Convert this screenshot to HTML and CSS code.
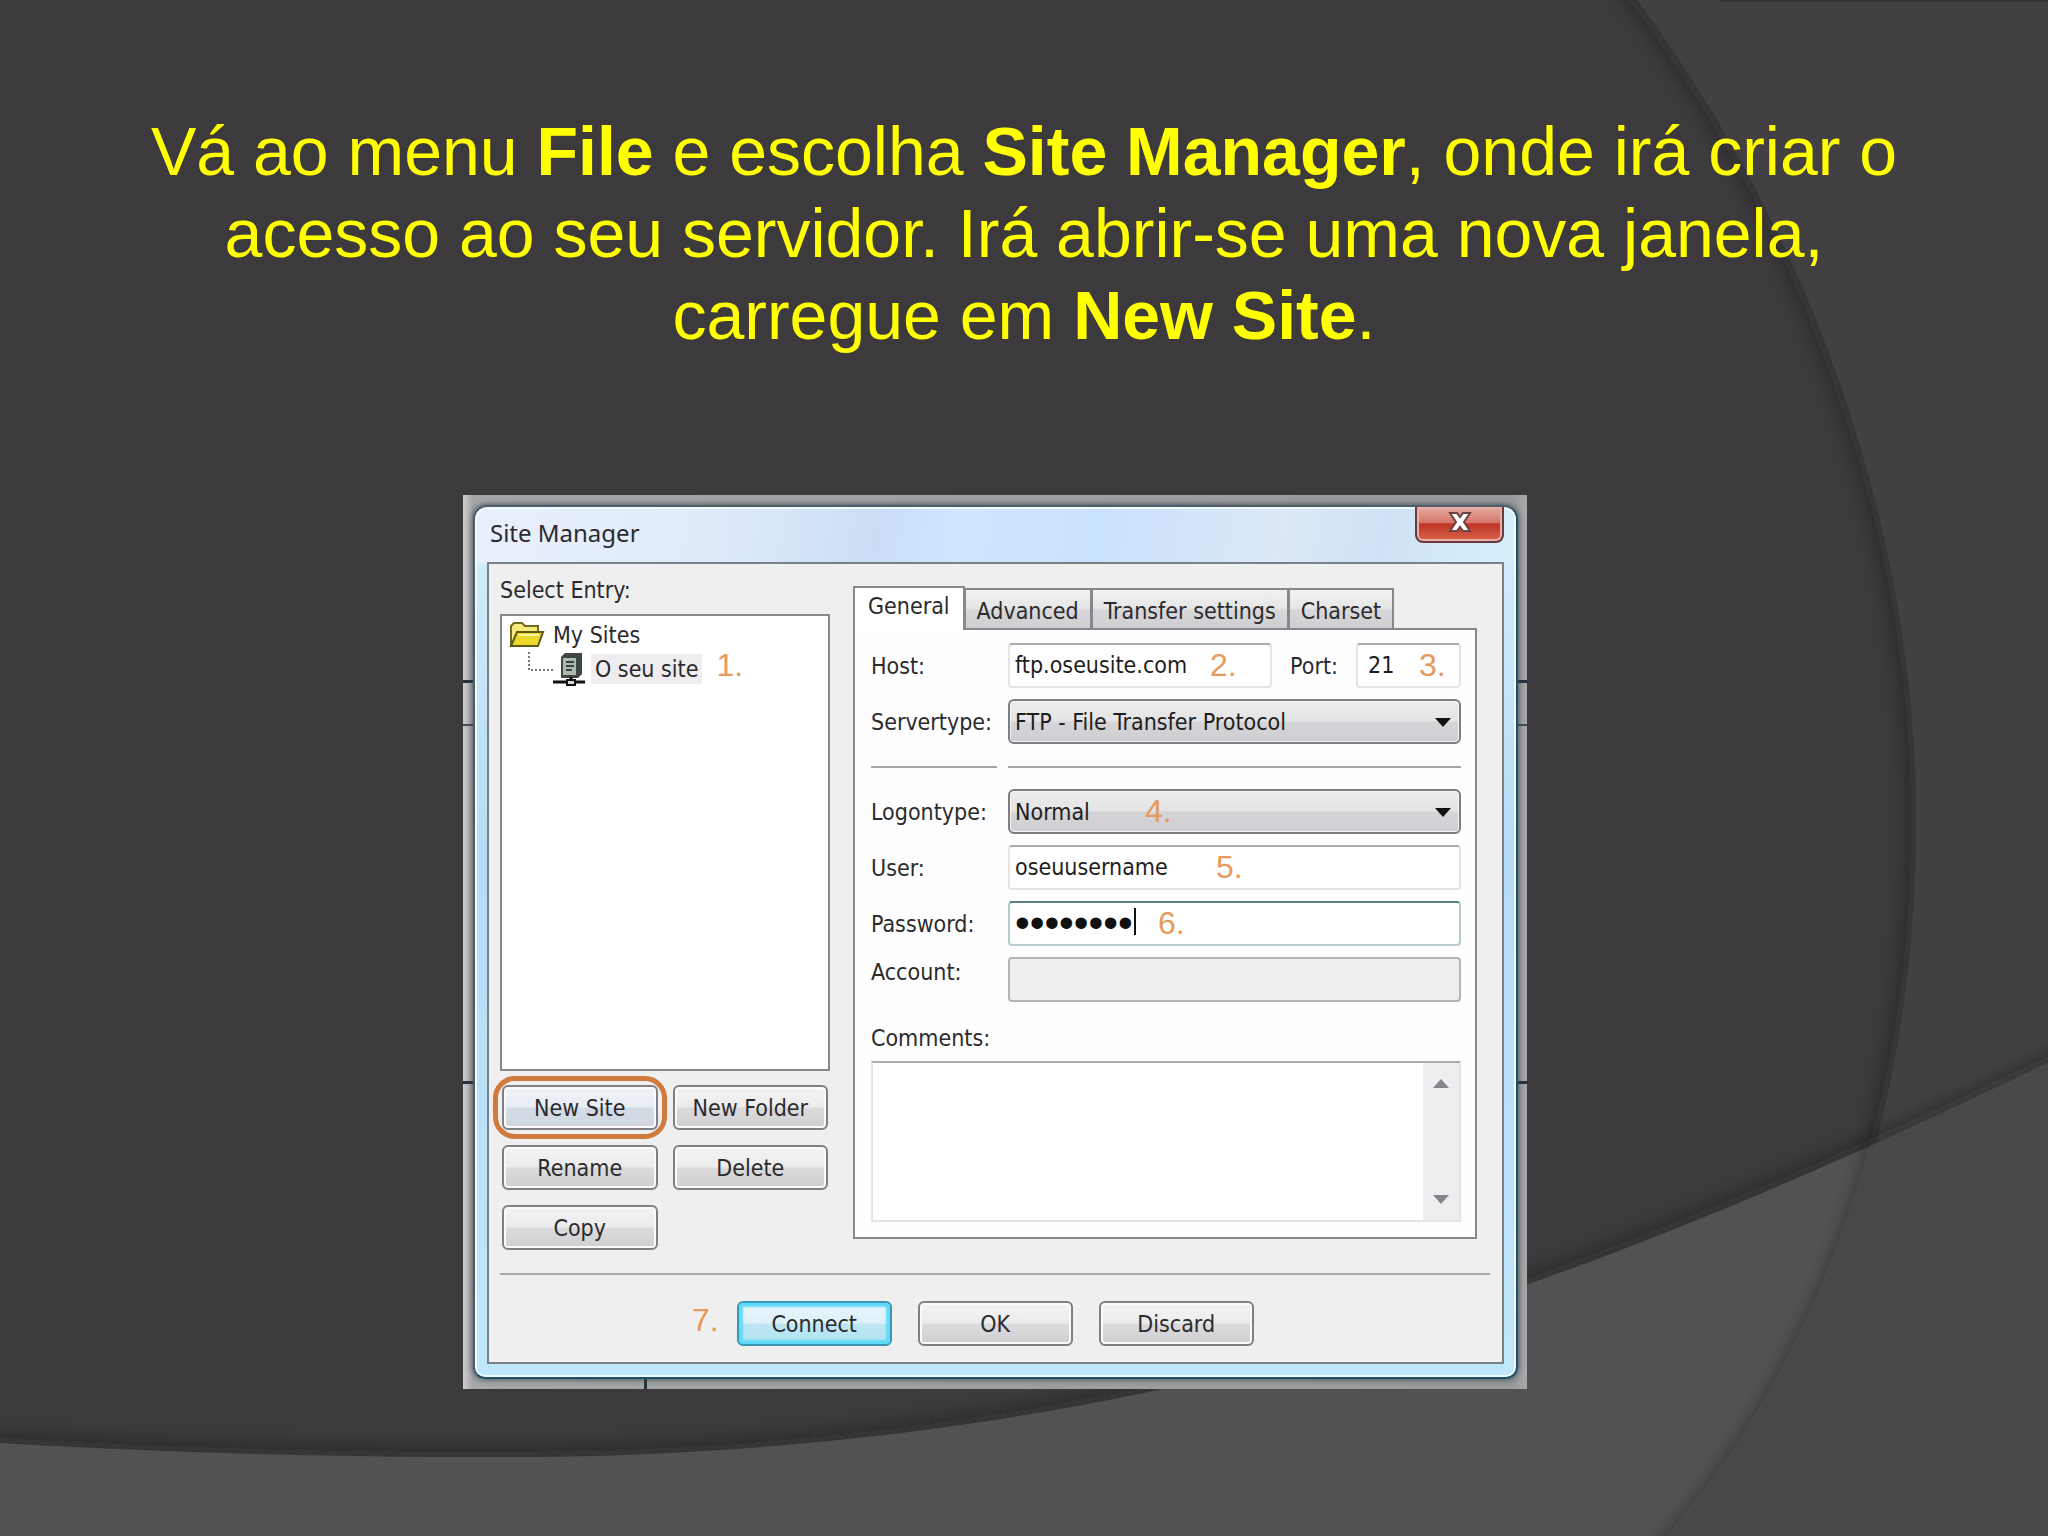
FILE: index.html
```html
<!DOCTYPE html>
<html lang="pt">
<head>
    <meta charset="UTF-8">
    <meta name="viewport" content="width=device-width, initial-scale=1.0">
    <title>Site Manager</title>
    <link rel="stylesheet" href="styles.css">
</head>
<body>
    <svg class="backdrop" viewBox="0 0 2048 1536" preserveAspectRatio="none" aria-hidden="true">
        <defs>
            <filter id="soft" x="-20%" y="-20%" width="140%" height="140%">
                <feGaussianBlur stdDeviation="9" />
            </filter>
            <clipPath id="leftOfArc">
                <path d="M0 0H1637C1830 260 1916 560 1916 820C1916 1090 1840 1340 1676 1536H0Z" />
            </clipPath>
            <clipPath id="aboveWave">
                <path d="M0 0H2048V1063C1880 1144 1700 1224 1526 1285C1230 1392 880 1460 480 1457C380 1457 200 1455 0 1443Z" />
            </clipPath>
            <clipPath id="belowWave">
                <path d="M0 1443C200 1455 380 1457 480 1457C880 1460 1230 1392 1526 1285C1700 1224 1880 1144 2048 1063V1536H0Z" />
            </clipPath>
        </defs>
        <rect width="2048" height="1536" fill="#3c3a3c" />
        <path fill="#424042" d="M1637 0C1830 260 1916 560 1916 820C1916 1090 1840 1340 1676 1536H2048V0Z" />
        <g clip-path="url(#aboveWave)">
            <path class="shade" filter="url(#soft)" d="M-40 1441L0 1443C200 1455 380 1457 480 1457C880 1460 1230 1392 1526 1285C1700 1224 1880 1144 2048 1063L2088 1043" />
        </g>
        <g clip-path="url(#belowWave)">
            <rect width="2048" height="1536" fill="#535154" />
            <path fill="#4a484b" d="M1637 0C1830 260 1916 560 1916 820C1916 1090 1840 1340 1676 1536H2048V0Z" />
        </g>
        <g clip-path="url(#leftOfArc)">
            <path class="shade" filter="url(#soft)" d="M1617 -26L1637 0C1830 260 1916 560 1916 820C1916 1090 1840 1340 1676 1536L1650 1566" />
        </g>
        <path d="M1720 1H2048" stroke="#363436" stroke-width="2" />
    </svg>

    <main class="slide">
        <h1 class="lead">Vá ao menu <b>File</b> e escolha <b>Site Manager</b>, onde irá criar o acesso ao seu servidor. Irá abrir-se uma nova janela, carregue em <b>New Site</b>.</h1>

        <div class="desktop">
            <div class="window">
                <div class="titlebar">
                    <span class="title">Site Manager</span>
                    <button type="button" class="close" aria-label="Close">
                        <svg width="24" height="20" viewBox="0 0 24 20">
                            <path d="M2 1H9L12 5L15 1H22L16 10L22 19H15L12 15L9 19H2L8 10Z" fill="#fff" stroke="#6d4344" stroke-width="2" />
                        </svg>
                    </button>
                </div>

                <form class="client">
                    <div class="columns">
                        <section class="entries">
                            <div class="caption">Select Entry:</div>
                            <ul class="tree">
                                <li>
                                    <svg width="36" height="28" viewBox="0 0 36 28">
                                        <path d="M2 25V5L5 2H13L16 5H29V11" fill="#f4ea7c" stroke="#6f6a20" stroke-width="2" />
                                        <path d="M2 25L8 11H34L29 25Z" fill="#ecd92c" stroke="#5e5914" stroke-width="2" />
                                        <path d="M10 14H30" stroke="#fbf6a8" stroke-width="2" />
                                    </svg>
                                    <span>My Sites</span>
                                </li>
                                <li class="child">
                                    <svg width="58" height="34" viewBox="0 0 58 34">
                                        <path d="M2 0V18H26" fill="none" stroke="#777" stroke-width="2" stroke-dasharray="2 2" />
                                        <path d="M34 5L38 1H55V22L51 26H34Z" fill="#3f4643" />
                                        <path d="M36 6H49V23H36Z" fill="#a9bcae" />
                                        <path d="M39 10H47M39 14H47M39 18H45" stroke="#3a443d" stroke-width="2" />
                                        <path d="M44 25V30M26 30H58" stroke="#111" stroke-width="3" />
                                        <rect x="40" y="28" width="8" height="5" fill="#d8dcd8" stroke="#111" stroke-width="2" />
                                    </svg>
                                    <span class="selected">O seu site</span>
                                    <span class="step">1.</span>
                                </li>
                            </ul>
                            <div class="entry-buttons">
                                <div class="ringed"><button type="button" class="btn cool">New Site</button></div>
                                <button type="button" class="btn">New Folder</button>
                                <button type="button" class="btn">Rename</button>
                                <button type="button" class="btn">Delete</button>
                                <button type="button" class="btn">Copy</button>
                            </div>
                        </section>

                        <section class="settings">
                            <div class="tabs" role="tablist">
                                <button type="button" class="tab active" role="tab" aria-selected="true">General</button>
                                <button type="button" class="tab" role="tab">Advanced</button>
                                <button type="button" class="tab" role="tab">Transfer settings</button>
                                <button type="button" class="tab" role="tab">Charset</button>
                            </div>
                            <div class="panel">
                                <div class="fields">
                                    <label for="host">Host:</label>
                                    <div class="host-row">
                                        <div class="field">
                                            <input type="text" id="host" value="ftp.oseusite.com">
                                            <span class="step over at-host">2.</span>
                                        </div>
                                        <label for="port">Port:</label>
                                        <div class="field">
                                            <input type="text" id="port" class="port" value="21">
                                            <span class="step over at-port">3.</span>
                                        </div>
                                    </div>

                                    <label for="server">Servertype:</label>
                                    <div class="field">
                                        <select id="server"><option>FTP - File Transfer Protocol</option></select>
                                        <span class="arrow"></span>
                                    </div>

                                    <hr><hr>

                                    <label for="logon">Logontype:</label>
                                    <div class="field">
                                        <select id="logon"><option>Normal</option></select>
                                        <span class="arrow"></span>
                                        <span class="step over at-logon">4.</span>
                                    </div>

                                    <label for="user">User:</label>
                                    <div class="field">
                                        <input type="text" id="user" value="oseuusername">
                                        <span class="step over at-user">5.</span>
                                    </div>

                                    <label for="pass">Password:</label>
                                    <div class="field">
                                        <input type="password" id="pass" class="focused" value="password">
                                        <span class="caret"></span>
                                        <span class="step over at-pass">6.</span>
                                    </div>

                                    <label for="account" class="upper">Account:</label>
                                    <div class="field">
                                        <input type="text" id="account" disabled>
                                    </div>
                                </div>

                                <label for="comments" class="comments-label">Comments:</label>
                                <div class="comments">
                                    <textarea id="comments"></textarea>
                                    <div class="scroll"><span class="up"></span><span class="down"></span></div>
                                </div>
                            </div>
                        </section>
                    </div>

                    <div class="footer">
                        <span class="step">7.</span>
                        <button type="button" class="btn default">Connect</button>
                        <button type="button" class="btn">OK</button>
                        <button type="button" class="btn">Discard</button>
                    </div>
                </form>
            </div>
        </div>
    </main>
</body>
</html>
```

FILE: styles.css
```css
* {
    box-sizing: border-box;
}
body {
    margin: 0;
    min-height: 100vh;
    background: #3c3a3c;
    font-family: "DejaVu Sans Condensed", "DejaVu Sans", sans-serif;
    font-size: 23px;
    line-height: 30px;
    color: #2b2b2e;
}
.backdrop {
    position: absolute;
    top: 0;
    left: 0;
    width: 100%;
    height: 100%;
}
.shade {
    fill: none;
    stroke: #1d1b1e;
    stroke-opacity: .4;
    stroke-width: 14px;
}
.slide {
    position: relative;
    padding: 110px 120px 0;
}
.lead {
    margin: 0 0 139px;
    font-family: "Liberation Sans", Arial, sans-serif;
    font-size: 68px;
    font-weight: normal;
    line-height: 82px;
    text-align: center;
    color: #ff0;
}

/* piece of desktop seen behind the window */
.desktop {
    max-width: 1064px;
    margin-left: 343px;
    padding: 10px 9px 10px 10px;
    background:
        linear-gradient(#26323c, #26323c) 0 185px / 100% 3px no-repeat,
        linear-gradient(#444c54, #444c54) 0 229px / 100% 2px no-repeat,
        linear-gradient(#26323c, #26323c) 0 586px / 100% 3px no-repeat,
        linear-gradient(#26323c, #26323c) 181px 100% / 3px 10px no-repeat,
        linear-gradient(90deg, #cfcbcc, #a5a6a7 10px, #989a9b 1050px, #a9a8aa);
}
.window {
    padding: 0 12px 13px 12px;
    border: 2px solid #4f5d68;
    border-right-color: #1d5266;
    border-bottom-color: #1d5266;
    border-radius: 14px 14px 12px 12px;
    background:
        linear-gradient(100deg, #e9f0fb 0, #dfeafa 240px, #c9def4 400px, #cfe6fd 480px, #c9e2fb 620px, #dbe7f6 800px, #cfe2f5 900px, #d5f1fc) 0 0 / 100% 56px no-repeat,
        linear-gradient(#d5eefb, #b5dcf5 40%, #bfe7fc);
    box-shadow: 0 0 6px #33444f, inset 0 0 0 2px #f0fbff;
}
.titlebar {
    display: flex;
    justify-content: space-between;
    align-items: flex-start;
    height: 55px;
}
.title {
    padding: 11px 0 0 3px;
    font-family: "Noto Sans", sans-serif;
    font-size: 24px;
}
.close {
    display: flex;
    justify-content: center;
    align-items: center;
    width: 89px;
    height: 36px;
    padding: 0 0 4px;
    border: 2px solid #6a3a40;
    border-top: 0;
    border-radius: 0 0 8px 8px;
    background: linear-gradient(#e2aaa0, #d8796c 45%, #bd3524 50%, #d9644f);
    box-shadow: inset 0 0 0 2px #e8b0a6;
}
.client {
    margin: 0;
    padding: 11px 12px 16px 11px;
    border: 2px solid #788088;
    background: #f0eff0;
}
.columns {
    display: grid;
    grid-template-columns: 330px 1fr;
    gap: 23px;
    padding-right: 13px;
}
.caption {
    margin-bottom: 9px;
}
.tree {
    height: 457px;
    margin: 0 0 14px;
    padding: 2px 7px;
    list-style: none;
    border: 2px solid #85888c;
    background: #fff;
}
.tree li {
    display: flex;
    align-items: center;
    gap: 8px;
    height: 34px;
}
.tree .child {
    gap: 6px;
    padding-left: 18px;
}
.selected {
    padding: 0 4px;
    background: #efedef;
}
.step {
    padding-bottom: 8px;
    font-family: "Liberation Sans", Arial, sans-serif;
    font-size: 32px;
    line-height: 32px;
    color: #e69a5c;
}
.tree .step {
    margin-left: 8px;
}
.entry-buttons {
    display: grid;
    grid-template-columns: 1fr 1fr;
    gap: 15px;
    padding: 0 2px;
}
.ringed {
    position: relative;
}
.ringed::after {
    content: "";
    position: absolute;
    inset: -9px;
    border: 5px solid #d07a3e;
    border-radius: 22px;
}
.btn {
    width: 100%;
    height: 45px;
    padding: 0;
    font: inherit;
    color: inherit;
    border: 2px solid #808084;
    border-radius: 6px;
    background: linear-gradient(#f4f3f4, #ececec 48%, #dbdadc 52%, #cfced0);
    box-shadow: inset 0 0 0 2px #fafafa;
}
.cool {
    background: linear-gradient(#eef3f8, #e8eef4 48%, #d3dce6 52%, #d0d6de);
}
.default {
    border-color: #3a96b4;
    background: linear-gradient(#e9f7fb, #dcf1f8 48%, #bfe6f3 52%, #b0e4f4);
    box-shadow: inset 0 0 2px 4px #5fdcfa;
}

.tabs {
    display: flex;
    align-items: flex-end;
    padding-top: 11px;
}
.tab {
    height: 40px;
    padding: 3px 11px 0;
    font: inherit;
    color: inherit;
    border: 2px solid #85888c;
    border-bottom: 0;
    border-left-width: 1px;
    background: linear-gradient(#f1f1f1, #e6e6e7 48%, #d8d7d9 52%, #cfced0);
}
.active {
    position: relative;
    height: 44px;
    margin-bottom: -2px;
    padding: 0 13px 6px;
    border-left-width: 2px;
    background: #fff;
}
.panel {
    padding: 13px 14px 15px 16px;
    border: 2px solid #85888c;
    background: #fefefe;
}
.fields {
    display: grid;
    grid-template-columns: 126px 1fr;
    gap: 11px;
    align-items: center;
}
.upper {
    align-self: start;
}
.fields hr {
    width: 100%;
    height: 2px;
    margin: 11px 0 10px;
    border: 0;
    background: #a6a5a8;
}
.host-row {
    display: grid;
    grid-template-columns: 1fr auto 105px;
    gap: 18px;
    align-items: center;
}
.field {
    position: relative;
}
.field input,
.field select {
    display: block;
    width: 100%;
    height: 45px;
    padding: 0 5px 2px;
    font: inherit;
    color: #1d1d20;
    border: 2px solid #e4e3e6;
    border-top-color: #acabae;
    border-radius: 4px;
    background: #fff;
}
.field select {
    appearance: none;
    padding-bottom: 0;
    border-color: #7e7e82;
    border-radius: 6px;
    background: linear-gradient(#eeedee, #e4e3e5 48%, #d5d4d7 52%, #cfced2);
    box-shadow: inset 0 0 0 1px #f4f4f4;
}
.field .port {
    padding-left: 10px;
}
.field .focused {
    font-family: "Liberation Sans", Arial, sans-serif;
    font-size: 42px;
    color: #111;
    border-color: #b6cbd0;
    border-top-color: #5f7d86;
}
.field input:disabled {
    border-color: #b4b3b6;
    background: #efeeef;
}
.arrow {
    position: absolute;
    right: 10px;
    top: 19px;
    border: 8px solid transparent;
    border-top: 9px solid #111;
    border-bottom: 0;
}
.caret {
    position: absolute;
    left: 126px;
    top: 7px;
    width: 2px;
    height: 27px;
    background: #111;
}
.over {
    position: absolute;
    top: 6px;
    padding: 0;
}
.at-host {
    left: 202px;
}
.at-port {
    left: 63px;
}
.at-logon {
    left: 137px;
}
.at-user {
    left: 208px;
}
.at-pass {
    left: 150px;
}
.comments-label {
    display: block;
    margin: 21px 0 8px;
}
.comments {
    display: flex;
    height: 161px;
    border: 2px solid #e4e3e6;
    border-top-color: #acabae;
}
.comments textarea {
    flex: 1;
    border: 0;
    font: inherit;
    resize: none;
    background: #fff;
}
.scroll {
    display: flex;
    flex-direction: column;
    justify-content: space-between;
    align-items: center;
    width: 36px;
    padding: 16px 0;
    background: #eeedef;
}
.up,
.down {
    border: 8px solid transparent;
}
.up {
    border-top: 0;
    border-bottom: 9px solid #85858a;
}
.down {
    border-bottom: 0;
    border-top: 9px solid #85858a;
}
.footer {
    display: flex;
    align-items: center;
    gap: 26px;
    margin-top: 23px;
    padding: 26px 0 0 192px;
    border-top: 2px solid #a9a8ab;
}
.footer .step {
    margin-right: -8px;
}
.footer .btn {
    width: 155px;
}
```
